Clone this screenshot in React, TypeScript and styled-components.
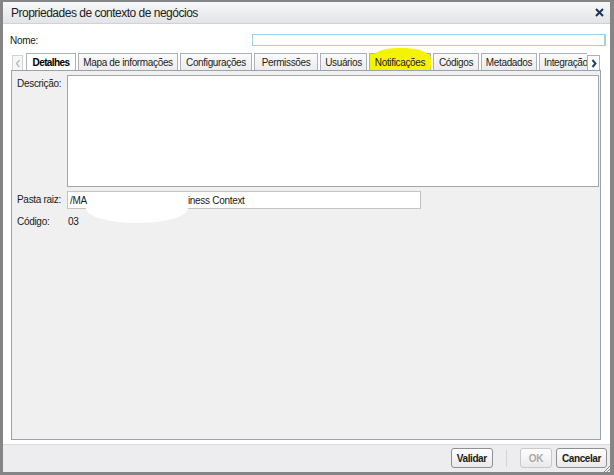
import React, { FC } from 'react';
import styled, { createGlobalStyle, css } from 'styled-components';

const GlobalStyle = createGlobalStyle`
  html, body {
    margin: 0;
    padding: 0;
    background: #858585;
    font-family: "Liberation Sans", Arial, sans-serif;
    color: #1a1a1a;
  }
`;

interface TabItem {
  label: string;
  width: number;
  active?: boolean;
  marked?: boolean;
}

const tabs: TabItem[] = [
  { label: 'Detalhes', width: 50, active: true },
  { label: 'Mapa de informações', width: 100 },
  { label: 'Configurações', width: 72 },
  { label: 'Permissões', width: 64 },
  { label: 'Usuários', width: 47 },
  { label: 'Notificações', width: 62, marked: true },
  { label: 'Códigos', width: 46 },
  { label: 'Metadados', width: 56 },
  { label: 'Integração', width: 48 },
];

const ArrowLeft = () => (
  <svg width="6" height="9" viewBox="0 0 6 9">
    <path d="M4.5 1 L1.5 4.5 L4.5 8" fill="none" stroke="#b8b8b8" strokeWidth="1.3" />
  </svg>
);

const ArrowRight = () => (
  <svg width="6" height="9" viewBox="0 0 6 9">
    <path d="M1.5 1 L4.5 4.5 L1.5 8" fill="none" stroke="#1d3f73" strokeWidth="2" />
  </svg>
);

const CloseIcon = () => (
  <svg width="9" height="9" viewBox="0 0 9 9">
    <path d="M1 1 L8 8 M8 1 L1 8" stroke="#1d3557" strokeWidth="2" />
  </svg>
);

const App: FC = () => {
  return (
    <>
      <GlobalStyle />
      <Dialog>
        <TitleBar>
          <Title>Propriedades de contexto de negócios</Title>
          <CloseIcon />
        </TitleBar>
        <Body>
          <NameRow>
            <Label>Nome:</Label>
            <NameInput />
          </NameRow>
          <TabStrip>
            <ScrollButton>
              <ArrowLeft />
            </ScrollButton>
            <Tabs>
              {tabs.map(tab => (
                <Tab
                  key={tab.label}
                  $width={tab.width}
                  $active={tab.active}
                  $marked={tab.marked}
                >
                  <span>{tab.label}</span>
                </Tab>
              ))}
            </Tabs>
            <ScrollButton $dark>
              <ArrowRight />
            </ScrollButton>
          </TabStrip>
          <Panel>
            <Form>
              <FieldLabel>Descrição:</FieldLabel>
              <TextArea />
              <FieldLabel>Pasta raiz:</FieldLabel>
              <PathField>
                /MA<Gap />iness Context
                <Redaction />
              </PathField>
              <FieldLabel>Código:</FieldLabel>
              <Value>03</Value>
            </Form>
          </Panel>
        </Body>
        <Footer>
          <Button>Validar</Button>
          <Divider />
          <Button disabled>OK</Button>
          <Button>Cancelar</Button>
          <Grip />
        </Footer>
      </Dialog>
    </>
  );
};

const Dialog = styled.div`
  position: relative;
  margin: 2px 0 0 3px;
  width: 607px;
  height: 470px;
  background: #fff;
  display: flex;
  flex-direction: column;
`;

const TitleBar = styled.div`
  height: 22px;
  box-sizing: border-box;
  display: flex;
  align-items: center;
  justify-content: space-between;
  padding: 0 6px 0 8px;
  background: linear-gradient(#f7f8f9, #e2e4e7);
  border-bottom: 1px solid #cfd2d6;
`;

const Title = styled.div`
  font-size: 12px;
  letter-spacing: -0.5px;
  color: #1c1c1c;
`;

const Body = styled.div`
  flex: 1;
  padding: 0 10px 0 8px;
  display: flex;
  flex-direction: column;
`;

const NameRow = styled.div`
  display: flex;
  align-items: center;
  height: 12px;
  margin-top: 10px;
`;

const Label = styled.div`
  font-size: 10px;
  letter-spacing: -0.3px;
  width: 242px;
  margin-left: -1px;
  padding-top: 1px;
`;

const NameInput = styled.div`
  flex: 1;
  height: 12px;
  box-sizing: border-box;
  margin-right: -6px;
  border: 1px solid #9fcfea;
  border-right-width: 2px;
  background: #fff;
`;

const TabStrip = styled.div`
  display: flex;
  align-items: flex-end;
  height: 17px;
  margin-top: 7px;
`;

const ScrollButton = styled.div<{ $dark?: boolean }>`
  width: 11px;
  height: 15px;
  box-sizing: border-box;
  margin: 0 3px 0 1px;
  display: flex;
  align-items: center;
  justify-content: center;
  border: 1px solid #cfd3d8;
  border-bottom: none;
  background: #f7f7f7;
  ${({ $dark }) =>
    $dark &&
    css`
      width: 13px;
      margin: 0;
      border-color: #aab1ba;
      background: #fff;
    `}
`;

const Tabs = styled.div`
  display: flex;
  gap: 2px;
  width: 561px;
  overflow-x: clip;
  overflow-y: visible;
`;

const Tab = styled.div<{ $width: number; $active?: boolean; $marked?: boolean }>`
  position: relative;
  flex: 0 0 ${({ $width }) => $width}px;
  height: 17px;
  box-sizing: border-box;
  display: flex;
  align-items: center;
  justify-content: center;
  white-space: nowrap;
  font-size: 10px;
  letter-spacing: -0.35px;
  color: #222;
  border: 1px solid #aab1ba;
  border-bottom: none;
  background: ${({ $active }) =>
    $active ? '#fff' : 'linear-gradient(#fbfbfb, #ececec)'};
  ${({ $active }) =>
    $active &&
    css`
      color: #000;
      font-weight: bold;
      letter-spacing: -0.6px;
    `}
  span {
    position: relative;
    z-index: 1;
  }
  ${({ $marked }) =>
    $marked &&
    css`
      background: #f2f200;
      &::before {
        content: '';
        position: absolute;
        left: 1px;
        right: -1px;
        top: -6px;
        bottom: 0;
        background: #f4f400;
        border-radius: 45% 45% 12% 12% / 50% 50% 10% 10%;
      }
    `}
  &:last-child {
    justify-content: flex-start;
    padding-left: 4px;
  }
`;

const Panel = styled.div`
  width: 590px;
  height: 370px;
  box-sizing: border-box;
  border: 1px solid #9aa2ad;
  background: #f0f0f0;
  padding: 4px 0 0 5px;
`;

const Form = styled.div`
  display: grid;
  grid-template-columns: 50px 532px;
  row-gap: 4px;
  align-items: start;
`;

const FieldLabel = styled.div`
  font-size: 10px;
  letter-spacing: -0.3px;
  padding-top: 3px;
`;

const TextArea = styled.div`
  height: 112px;
  box-sizing: border-box;
  border: 1px solid #a5a5a5;
  background: #fff;
`;

const PathField = styled.div`
  position: relative;
  width: 354px;
  height: 18px;
  box-sizing: border-box;
  border: 1px solid #c4c4c4;
  background: #fff;
  font-size: 10px;
  letter-spacing: -0.3px;
  padding: 3px 0 0 2px;
  white-space: nowrap;
`;

const Gap = styled.span`
  display: inline-block;
  width: 101px;
`;

const Redaction = styled.span`
  position: absolute;
  left: 18px;
  top: 2px;
  width: 102px;
  height: 29px;
  background: #fff;
  border-radius: 50%;
`;

const Value = styled.div`
  font-size: 10px;
  letter-spacing: -0.3px;
  padding: 3px 0 0 1px;
`;

const Footer = styled.div`
  position: relative;
  height: 28px;
  box-sizing: border-box;
  margin-top: 3px;
  border-top: 1px solid #d9dadd;
  background: #ededef;
  display: flex;
  align-items: center;
  justify-content: flex-end;
  gap: 4px;
  padding: 0 3px 1px 0;
`;

const Button = styled.button`
  height: 20px;
  padding: 0 5px;
  border: 1px solid #8d8f93;
  border-radius: 3px;
  background: linear-gradient(#ffffff, #e9e9ea);
  font-family: "Liberation Sans", Arial, sans-serif;
  font-size: 10px;
  font-weight: bold;
  letter-spacing: -0.4px;
  color: #1a1a1a;
  &:disabled {
    color: #a9a9a9;
    border-color: #c8c9cc;
    padding: 0 8px;
  }
`;

const Divider = styled.div`
  width: 1px;
  height: 17px;
  background: #d3d4d7;
  margin: 0 9px;
`;

const Grip = styled.div`
  position: absolute;
  right: 0;
  bottom: 0;
  width: 6px;
  height: 6px;
  background: linear-gradient(135deg, transparent 45%, #8a8a8a 45%, #8a8a8a 55%, transparent 55%, transparent 70%, #8a8a8a 70%, #8a8a8a 80%, transparent 80%);
`;

export default App;
